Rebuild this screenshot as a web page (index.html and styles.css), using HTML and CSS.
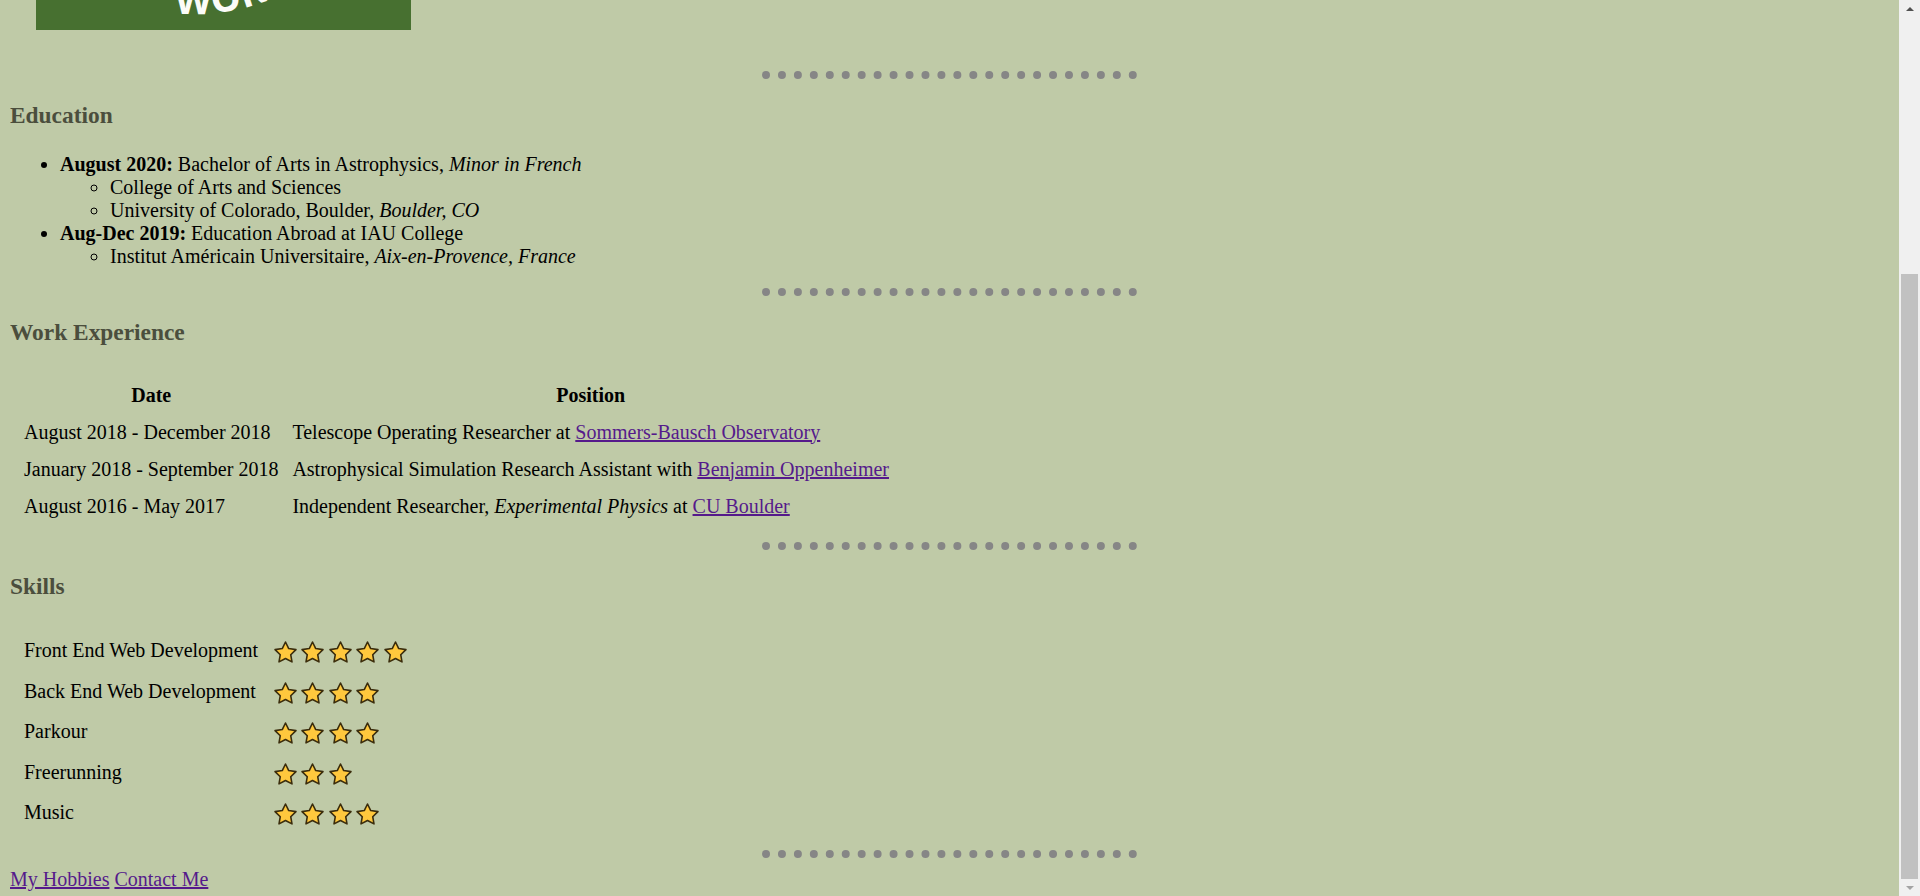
FILE: index.html
```html
<!DOCTYPE html>
<html lang="en">
<head>
<meta charset="utf-8">
<title>Résumé</title>
<link rel="stylesheet" href="styles.css">
<script src="script.js" defer></script>
</head>
<body>
<header class="top">
  <h1 class="name">Curriculum Vitae</h1>
  <div class="logo">
    <svg class="logo-art" viewBox="0 0 375 307" width="375" height="307" aria-label="Work logo">
      <defs>
        <path id="arc" d="M -41 91 A 200 200 0 0 0 359 91"/>
      </defs>
      <text class="logo-text"><textPath href="#arc" startOffset="294">WORK</textPath></text>
    </svg>
  </div>
</header>

<hr class="divider">

<h3 class="section-title">Education</h3>
<ul class="edu">
  <li><strong>August 2020:</strong> Bachelor of Arts in Astrophysics, <em>Minor in French</em>
    <ul class="sub">
      <li>College of Arts and Sciences</li>
      <li>University of Colorado, Boulder, <em>Boulder, CO</em></li>
    </ul>
  </li>
  <li><strong>Aug-Dec 2019:</strong> Education Abroad at IAU College
    <ul class="sub">
      <li>Institut Américain Universitaire, <em>Aix-en-Provence, France</em></li>
    </ul>
  </li>
</ul>

<hr class="divider">

<h3 class="section-title">Work Experience</h3>
<table class="grid">
  <thead>
    <tr><th>Date</th><th>Position</th></tr>
  </thead>
  <tbody>
    <tr><td>August 2018 - December 2018</td><td>Telescope Operating Researcher at <a class="link" href="#">Sommers-Bausch Observatory</a></td></tr>
    <tr><td>January 2018 - September 2018</td><td>Astrophysical Simulation Research Assistant with <a class="link" href="#">Benjamin Oppenheimer</a></td></tr>
    <tr><td>August 2016 - May 2017</td><td>Independent Researcher, <em>Experimental Physics</em> at <a class="link" href="#">CU Boulder</a></td></tr>
  </tbody>
</table>

<hr class="divider">

<h3 class="section-title">Skills</h3>
<table class="grid skills">
  <tbody>
    <tr><td class="skill">Front End Web Development</td><td><div class="stars" data-n="5"></div></td></tr>
    <tr><td class="skill">Back End Web Development</td><td><div class="stars" data-n="4"></div></td></tr>
    <tr><td class="skill">Parkour</td><td><div class="stars" data-n="4"></div></td></tr>
    <tr><td class="skill">Freerunning</td><td><div class="stars" data-n="3"></div></td></tr>
    <tr><td class="skill">Music</td><td><div class="stars" data-n="4"></div></td></tr>
  </tbody>
</table>

<hr class="divider">

<nav class="footer-links"><a class="link" href="#">My Hobbies</a> <a class="link" href="#">Contact Me</a></nav>

<div class="scrollbar" aria-hidden="true">
  <span class="sb-button"><span class="sb-arrow-up"></span></span>
  <span class="sb-thumb"></span>
  <span class="sb-button sb-bottom"><span class="sb-arrow-down"></span></span>
</div>
</body>
</html>
```

FILE: styles.css
```css
html {
  background: #bfcaa7;
}

body {
  margin: 0 31px 5px 10px;
  font-family: "Liberation Serif", "Times New Roman", serif;
  font-size: 20px;
  color: #000;
}

.name {
  font-size: 40px;
  line-height: 46px;
  margin: 27px 0;
  color: #4b4e3d;
}

.logo {
  width: 375px;
  height: 307px;
  margin: 0 0 41px 26px;
  background: #477030;
}

.logo-art {
  display: block;
}

.logo-text {
  fill: #fbfcf8;
  font-family: "Open Sans", "Liberation Sans", sans-serif;
  font-weight: 700;
  font-size: 38px;
  letter-spacing: 1px;
}

.divider {
  border: none;
  border-top: 8px dotted #868686;
  height: 0;
  width: 20%;
  margin: 10px auto;
}

.section-title {
  font-size: 23.4px;
  margin: 23.4px 0;
  color: #4b4e3d;
}

.edu {
  margin: 20px 0;
  padding-left: 50px;
}

.sub {
  padding-left: 50px;
  list-style-type: circle;
}

.grid {
  border-spacing: 14px;
  border-collapse: separate;
}

.grid th,
.grid td {
  padding: 0;
  text-align: left;
}

.grid th {
  text-align: center;
}

.skills td {
  height: 26.5px;
  line-height: 26.5px;
}

.skill {
  padding-right: 2px;
}

.stars {
  display: flex;
  gap: 4.4px;
  height: 26.5px;
  box-sizing: border-box;
  padding-top: 4px;
  padding-left: 2px;
  align-items: flex-start;
}

.star {
  display: block;
  width: 23px;
  height: 22px;
  overflow: visible;
}

.link {
  color: #551a8b;
}

.footer-links {
  line-height: 23px;
}

/* window scrollbar, as in the screenshot */
.scrollbar {
  position: fixed;
  top: 0;
  right: 0;
  width: 21px;
  height: 100vh;
  background: #f0f0f0;
  display: flex;
  flex-direction: column;
}

.sb-button {
  height: 17px;
  flex: none;
  display: flex;
  align-items: center;
  justify-content: center;
}

.sb-bottom {
  margin-top: auto;
}

.sb-arrow-up {
  width: 0;
  height: 0;
  border-left: 4.5px solid transparent;
  border-right: 4.5px solid transparent;
  border-bottom: 4px solid #505050;
}

.sb-arrow-down {
  width: 0;
  height: 0;
  border-left: 4.5px solid transparent;
  border-right: 4.5px solid transparent;
  border-top: 4px solid #a3a3a3;
}

.sb-thumb {
  margin: 257px 2px 0 2px;
  height: 606px;
  background: #c1c1c1;
}
```

FILE: script.js
```js
(function () {
  var starPath = "M11.5 1 L14.73 7.55 L21.96 8.6 L16.73 13.7 L17.97 20.9 L11.5 17.5 L5.03 20.9 L6.27 13.7 L1.04 8.6 L8.27 7.55 Z";
  var boxes = document.querySelectorAll(".stars");
  boxes.forEach(function (box) {
    var n = parseInt(box.getAttribute("data-n"), 10) || 0;
    var html = "";
    for (var i = 0; i < n; i++) {
      html += '<svg class="star" viewBox="0 0 23 22" aria-hidden="true"><path d="' + starPath +
        '" fill="#ffc83d" stroke="#3a2c0c" stroke-width="1.6" stroke-linejoin="round"/></svg>';
    }
    box.innerHTML = html;
  });
  window.scrollTo(0, document.documentElement.scrollHeight);
})();
```
